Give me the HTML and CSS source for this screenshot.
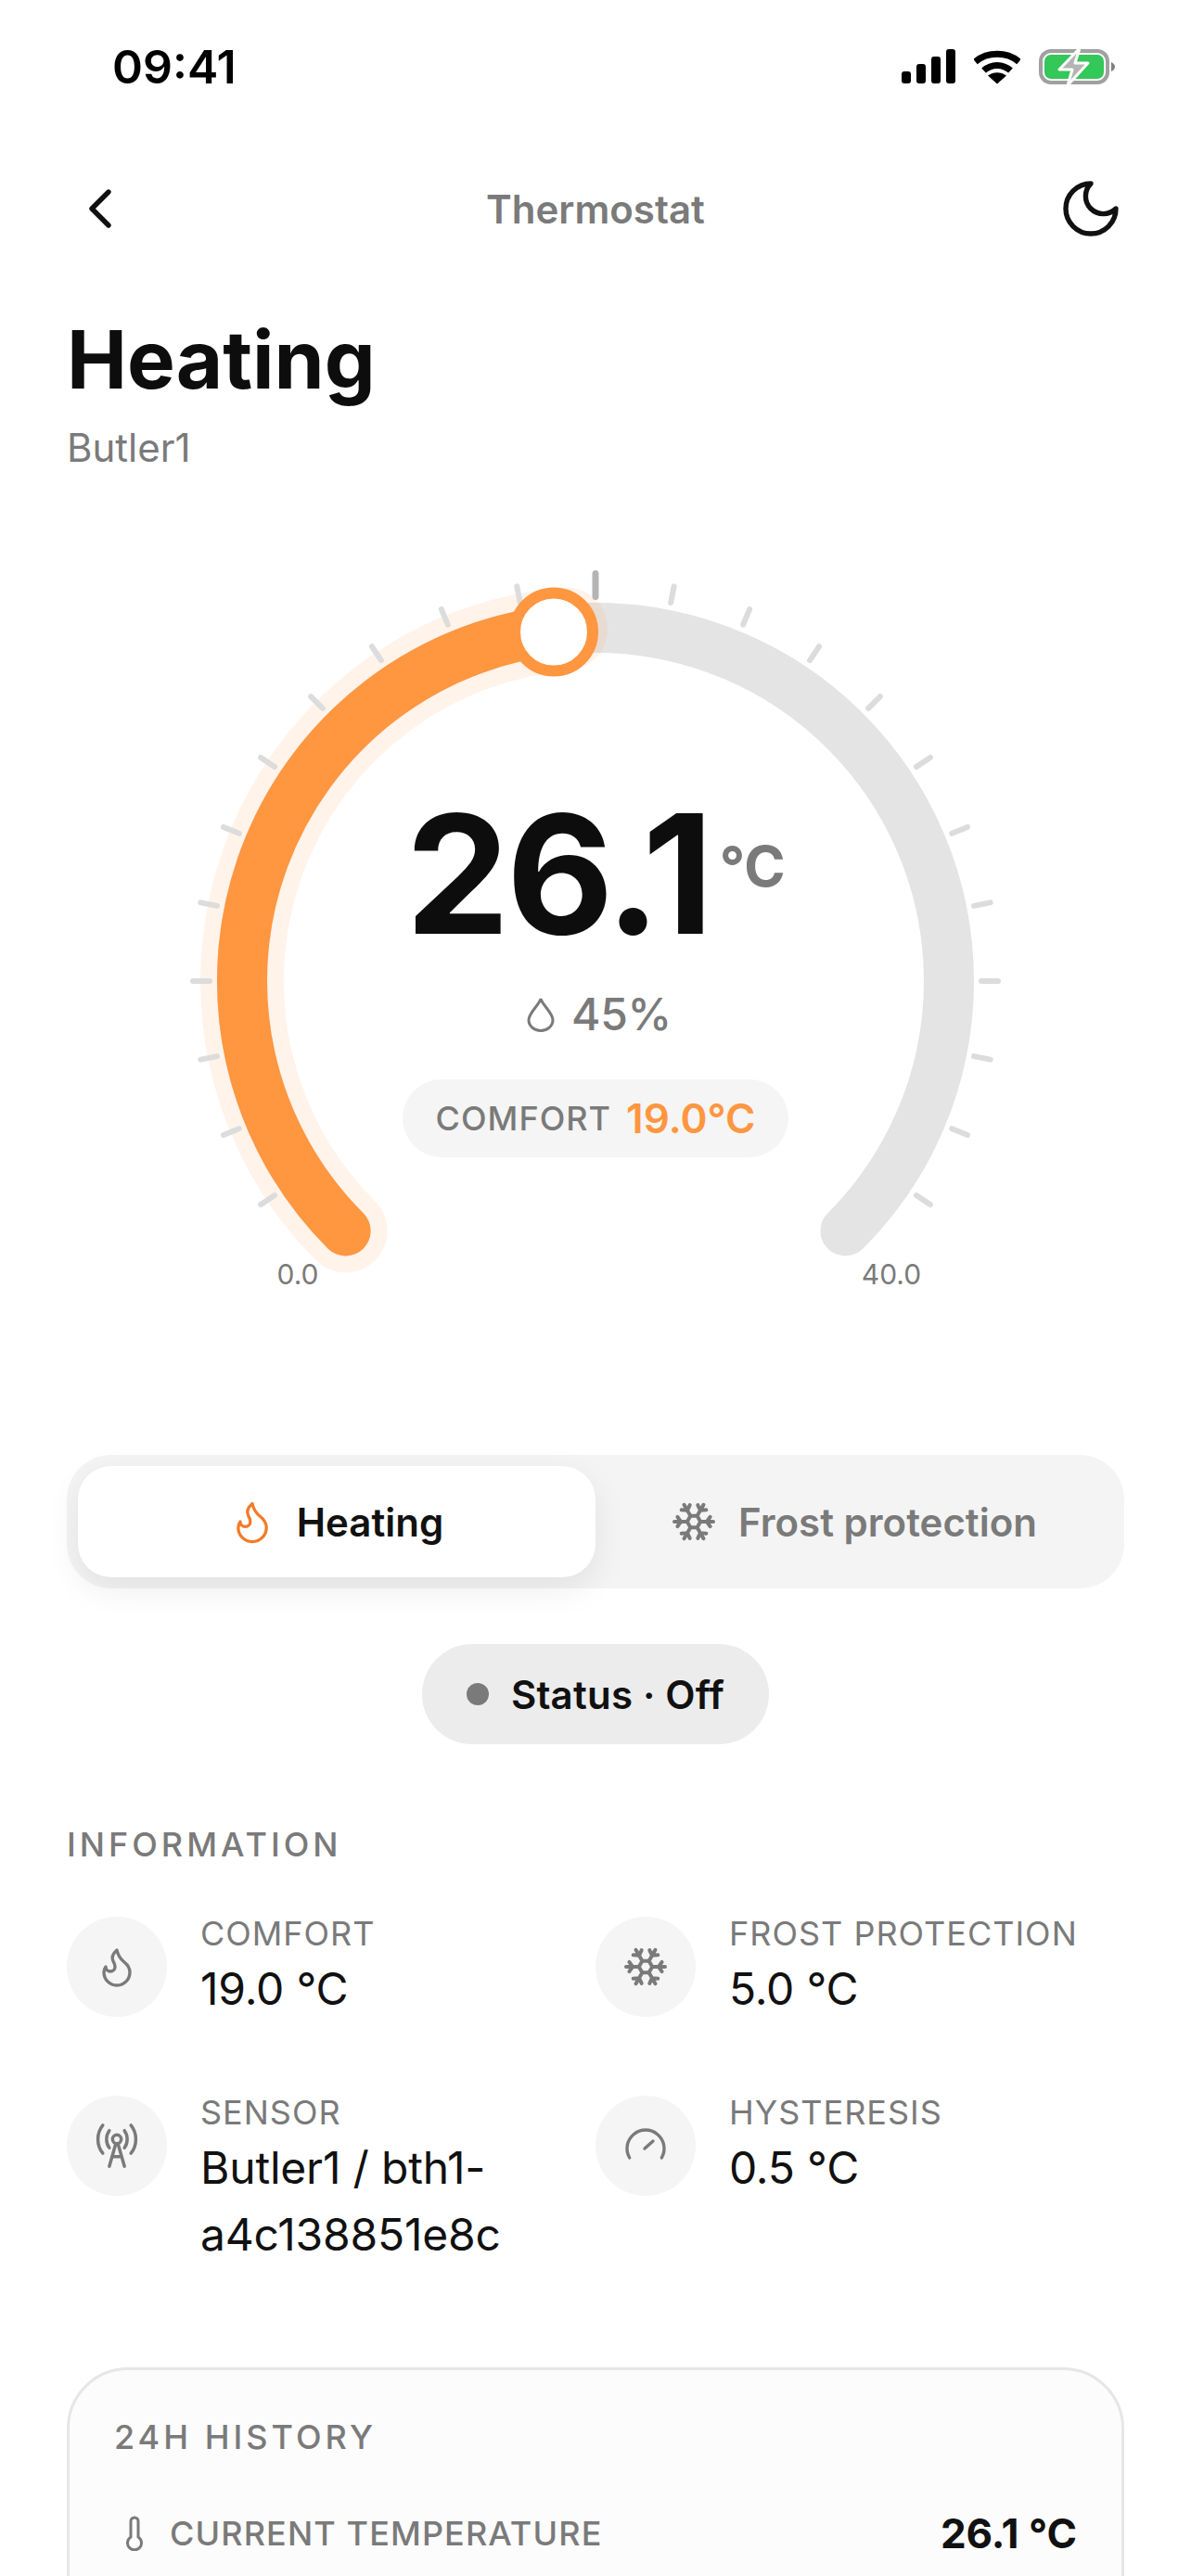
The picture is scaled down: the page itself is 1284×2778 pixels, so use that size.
FILE: index.html
```html
<!DOCTYPE html>
<html lang="en">
<head>
<meta charset="UTF-8">
<meta name="viewport" content="width=device-width, initial-scale=1.0">
<title>Thermostat</title>
<link rel="stylesheet" href="styles.css">
</head>
<body>

<svg class="sprite">
  <defs>
    <path id="arm" d="M15.6 12H22.5M19 12l1.8 2.6M19 12l1.8-2.6"/>
  </defs>
  <symbol id="snowflake" viewBox="0 0 24 24">
    <path d="M15.6 12 13.8 15.12H10.2L8.4 12 10.2 8.88H13.8Z"/>
    <use href="#arm"/>
    <use href="#arm" transform="rotate(60 12 12)"/>
    <use href="#arm" transform="rotate(120 12 12)"/>
    <use href="#arm" transform="rotate(180 12 12)"/>
    <use href="#arm" transform="rotate(240 12 12)"/>
    <use href="#arm" transform="rotate(300 12 12)"/>
  </symbol>
  <symbol id="flame" viewBox="0 0 24 24">
    <path d="M8.5 14.5A2.5 2.5 0 0 0 11 12c0-1.38-.5-2-1-3-1.072-2.143-.224-4.054 2-6 .5 2.5 2 4.9 4 6.5 2 1.6 3 3.5 3 5.5a7 7 0 1 1-14 0c0-1.153.433-2.294 1-3a2.5 2.5 0 0 0 2.5 2.5z"/>
  </symbol>
</svg>

<div class="statusbar">
  <span class="time">09:41</span>
  <div class="status-icons">
    <svg width="58" height="38" viewBox="0 0 58 38" fill="#000">
      <rect x="0" y="24" width="10" height="13" rx="3"/>
      <rect x="16" y="16" width="10" height="21" rx="3"/>
      <rect x="32" y="8" width="10" height="29" rx="3"/>
      <rect x="48" y="0" width="10" height="37" rx="3"/>
    </svg>
    <svg width="50" height="38" viewBox="0 0 50 38" fill="none" stroke="#000" stroke-width="7">
      <path d="M1.5 13.5C14.5 2.5 35.5 2.5 48.5 13.5"/>
      <path d="M10.5 23C19 15.5 31 15.5 39.5 23"/>
      <path d="M25 37.5 15 28.5C21 24 29 24 35 28.5Z" fill="#000" stroke="none"/>
    </svg>
    <svg width="82" height="40" viewBox="0 0 82 40">
      <rect x="2" y="3" width="72" height="34" rx="11" fill="none" stroke="#a0a0a0" stroke-width="4"/>
      <rect x="6" y="7" width="64" height="26" rx="7" fill="#34c759"/>
      <path d="M78 15c2.5 1 4 3 4 5s-1.5 4-4 5Z" fill="#808080"/>
      <path d="M44 0 22 23H36L31 40 53 16H39Z" fill="#b4b4b4" stroke="#fff" stroke-width="3" stroke-linejoin="round"/>
    </svg>
  </div>
</div>

<div class="nav">
  <svg class="nav-icon" viewBox="0 0 24 24" fill="none" stroke="#111" stroke-width="1.8" stroke-linecap="round" stroke-linejoin="round">
    <path d="m15 18-6-6 6-6"/>
  </svg>
  <span class="nav-title">Thermostat</span>
  <svg class="nav-icon" viewBox="0 0 24 24" fill="none" stroke="#111" stroke-width="1.8" stroke-linecap="round" stroke-linejoin="round">
    <path d="M12 3a6 6 0 0 0 9 9 9 9 0 1 1-9-9Z"/>
  </svg>
</div>

<div class="page-head">
  <h1>Heating</h1>
  <p>Butler1</p>
</div>

<div class="gauge">
  <svg class="dial" width="1140" height="810" viewBox="0 0 1140 810" fill="none">
    <path d="M300.6 726.4A381 381 0 1 1 839.4 726.4" stroke="#e4e4e4" stroke-width="54" stroke-linecap="round"/>
    <path d="M300.6 726.4A381 381 0 0 1 538 77.3" stroke="#ff9640" stroke-opacity="0.11" stroke-width="90" stroke-linecap="round"/>
    <path d="M300.6 726.4A381 381 0 0 1 538 77.3" stroke="#ff9640" stroke-width="54" stroke-linecap="round"/>
    <g stroke="#dcdcdc" stroke-width="6" stroke-linecap="round">
      <line x1="570" y1="23" x2="570" y2="41" transform="rotate(-123.75 570 457)"/>
      <line x1="570" y1="23" x2="570" y2="41" transform="rotate(-112.5 570 457)"/>
      <line x1="570" y1="23" x2="570" y2="41" transform="rotate(-101.25 570 457)"/>
      <line x1="570" y1="23" x2="570" y2="41" transform="rotate(-90 570 457)"/>
      <line x1="570" y1="23" x2="570" y2="41" transform="rotate(-78.75 570 457)"/>
      <line x1="570" y1="23" x2="570" y2="41" transform="rotate(-67.5 570 457)"/>
      <line x1="570" y1="23" x2="570" y2="41" transform="rotate(-56.25 570 457)"/>
      <line x1="570" y1="23" x2="570" y2="41" transform="rotate(-45 570 457)"/>
      <line x1="570" y1="23" x2="570" y2="41" transform="rotate(-33.75 570 457)"/>
      <line x1="570" y1="23" x2="570" y2="41" transform="rotate(-22.5 570 457)"/>
      <line x1="570" y1="23" x2="570" y2="41" transform="rotate(-11.25 570 457)"/>
      <line x1="570" y1="23" x2="570" y2="41" transform="rotate(11.25 570 457)"/>
      <line x1="570" y1="23" x2="570" y2="41" transform="rotate(22.5 570 457)"/>
      <line x1="570" y1="23" x2="570" y2="41" transform="rotate(33.75 570 457)"/>
      <line x1="570" y1="23" x2="570" y2="41" transform="rotate(45 570 457)"/>
      <line x1="570" y1="23" x2="570" y2="41" transform="rotate(56.25 570 457)"/>
      <line x1="570" y1="23" x2="570" y2="41" transform="rotate(67.5 570 457)"/>
      <line x1="570" y1="23" x2="570" y2="41" transform="rotate(78.75 570 457)"/>
      <line x1="570" y1="23" x2="570" y2="41" transform="rotate(90 570 457)"/>
      <line x1="570" y1="23" x2="570" y2="41" transform="rotate(101.25 570 457)"/>
      <line x1="570" y1="23" x2="570" y2="41" transform="rotate(112.5 570 457)"/>
      <line x1="570" y1="23" x2="570" y2="41" transform="rotate(123.75 570 457)"/>
    </g>
    <line x1="570" y1="17.5" x2="570" y2="42.5" stroke="#b4b4b4" stroke-width="7" stroke-linecap="round"/>
    <circle cx="525" cy="80.5" r="42" fill="#fff" stroke="#ff9640" stroke-width="12"/>
    <text class="dial-label" x="249" y="784" text-anchor="middle">0.0</text>
    <text class="dial-label" x="889" y="784" text-anchor="middle">40.0</text>
  </svg>

  <div class="readout">
    <div class="temp"><span class="temp-value">26.1</span><span class="temp-unit">°C</span></div>
    <div class="humidity">
      <svg width="30" height="38" viewBox="0 0 30 38" fill="none" stroke="#7a7a7a" stroke-width="3">
        <path d="M15 2C14 8 2 17 2 25a13 11.5 0 0 0 26 0C28 17 16 8 15 2Z"/>
      </svg>
      <span>45%</span>
    </div>
    <div class="setpoint"><span class="setpoint-label">COMFORT</span><span class="setpoint-value">19.0°C</span></div>
  </div>
</div>

<div class="segment">
  <div class="segment-item active">
    <svg class="segment-icon flame-icon"><use href="#flame"/></svg>
    <span>Heating</span>
  </div>
  <div class="segment-item">
    <svg class="segment-icon frost-icon"><use href="#snowflake"/></svg>
    <span>Frost protection</span>
  </div>
</div>

<div class="status-row">
  <div class="status-pill"><i class="dot"></i><span>Status · Off</span></div>
</div>

<h2 class="section-title">INFORMATION</h2>
<div class="info-grid">
  <div class="info-item">
    <div class="info-icon">
      <svg class="line-icon"><use href="#flame"/></svg>
    </div>
    <div class="info-text"><div class="info-label">COMFORT</div><div class="info-value">19.0 °C</div></div>
  </div>
  <div class="info-item">
    <div class="info-icon">
      <svg class="frost-icon"><use href="#snowflake"/></svg>
    </div>
    <div class="info-text"><div class="info-label">FROST PROTECTION</div><div class="info-value">5.0 °C</div></div>
  </div>
  <div class="info-item">
    <div class="info-icon">
      <svg class="line-icon tower-icon" viewBox="0 0 24 24">
        <path d="M5.5 2.5c-3 3.7-3 9.3 0 13M18.5 2.5c3 3.7 3 9.3 0 13M8.5 5c-1.7 2.3-1.7 5.7 0 8M15.5 5c1.7 2.3 1.7 5.7 0 8"/>
        <circle cx="12" cy="9" r="2"/>
        <path d="M11.5 11 8.5 21.5M12.5 11l3 10.5M9.8 17h4.4"/>
      </svg>
    </div>
    <div class="info-text"><div class="info-label">SENSOR</div><div class="info-value">Butler1 / bth1-a4c138851e8c</div></div>
  </div>
  <div class="info-item">
    <div class="info-icon">
      <svg class="line-icon" viewBox="0 0 24 24">
        <path d="M3.34 18.5A10 10 0 1 1 20.66 18.5M11.5 13.5 16 9.5"/>
      </svg>
    </div>
    <div class="info-text"><div class="info-label">HYSTERESIS</div><div class="info-value">0.5 °C</div></div>
  </div>
</div>

<div class="card">
  <h2 class="section-title card-title">24H HISTORY</h2>
  <div class="card-row">
    <svg class="thermo" viewBox="0 0 20 38" fill="none" stroke="#7a7a7a" stroke-width="3">
      <path d="M6 6a4 4 0 0 1 8 0v17a7.5 7.5 0 1 1-8 0Z"/>
    </svg>
    <span class="card-label">CURRENT TEMPERATURE</span>
    <span class="card-value">26.1 °C</span>
  </div>
</div>

</body>
</html>
```

FILE: styles.css
```css
html, body {
  margin: 0;
  padding: 0;
  background-color: white;
  font-family: Inter, "Liberation Sans", sans-serif;
  color: #111;
}
body {
  width: 1284px;
  height: 2778px;
  overflow: hidden;
}
svg {
  display: block;
}
.sprite {
  display: none;
}

/* status bar */
.statusbar {
  height: 144px;
  padding: 0 82px 0 121px;
  display: flex;
  align-items: center;
  justify-content: space-between;
  box-sizing: border-box;
}
.time {
  font-size: 50px;
  font-weight: 600;
  color: #000;
}
.status-icons {
  display: flex;
  align-items: center;
  gap: 20px;
}

/* nav */
.nav {
  margin-top: 45px;
  padding: 0 72px;
  display: flex;
  align-items: center;
  justify-content: space-between;
}
.nav-icon {
  width: 72px;
  height: 72px;
}
.nav-title {
  font-size: 42px;
  font-weight: 600;
  color: #7a7a7a;
}

.page-head {
  margin-top: 75px;
  padding: 0 72px;
}
.page-head h1 {
  margin: 0;
  font-size: 87px;
  line-height: 104px;
  font-weight: 700;
  color: #0d0d0d;
}
.page-head p {
  margin: 19px 0 0;
  font-size: 42px;
  line-height: 48px;
  color: #7a7a7a;
}

/* gauge */
.gauge {
  position: relative;
  margin: 94px 72px 0;
  width: 1140px;
  height: 810px;
}
.dial-label {
  font-family: Inter, "Liberation Sans", sans-serif;
  font-size: 30px;
  fill: #7a7a7a;
}
.readout {
  position: absolute;
  top: 237px;
  left: 0;
  right: 0;
  display: flex;
  flex-direction: column;
  align-items: center;
}
.temp {
  display: flex;
  align-items: flex-start;
  line-height: 1;
}
.temp-value {
  font-size: 178px;
  font-weight: 700;
  letter-spacing: -3.5px;
  line-height: 210px;
  color: #0d0d0d;
}
.temp-unit {
  margin-top: 60px;
  margin-left: 10px;
  font-size: 60px;
  font-weight: 700;
  line-height: 72px;
  color: #7a7a7a;
}
.humidity {
  margin-top: 18px;
  margin-left: 8px;
  display: flex;
  align-items: center;
  gap: 18px;
  font-size: 48px;
  font-weight: 500;
  letter-spacing: -0.3px;
  line-height: 56px;
  color: #7a7a7a;
}
.setpoint {
  margin-top: 42px;
  height: 84px;
  padding: 0 36px;
  display: flex;
  align-items: center;
  gap: 16px;
  border-radius: 42px;
  background-color: #f5f5f5;
}
.setpoint-label {
  font-size: 36px;
  font-weight: 500;
  letter-spacing: 1px;
  color: #7a7a7a;
}
.setpoint-value {
  font-size: 44px;
  font-weight: 600;
  color: #ff9640;
}

/* mode switch */
.segment {
  margin: 158px 72px 0;
  padding: 12px;
  display: flex;
  height: 144px;
  box-sizing: border-box;
  border-radius: 48px;
  background-color: #f4f4f4;
}
.segment-item {
  flex: 1;
  display: flex;
  align-items: center;
  justify-content: center;
  gap: 24px;
  border-radius: 36px;
  font-size: 42px;
  font-weight: 600;
  color: #7a7a7a;
}
.segment-item.active {
  background-color: white;
  color: #111;
  box-shadow: 0 12px 36px rgba(0,0,0,0.08);
}
.segment-icon {
  width: 48px;
  height: 48px;
}
.flame-icon {
  width: 52px;
  height: 52px;
  margin-right: -2px;
  margin-left: -2px;
  fill: none;
  stroke: #f47a25;
  stroke-width: 1.5;
  stroke-linecap: round;
  stroke-linejoin: round;
}
.frost-icon {
  fill: none;
  stroke: #7a7a7a;
  stroke-width: 2;
  stroke-linecap: round;
  stroke-linejoin: round;
}
.line-icon {
  fill: none;
  stroke: #7a7a7a;
  stroke-width: 1.7;
  stroke-linecap: round;
  stroke-linejoin: round;
}

.status-row {
  margin-top: 60px;
  display: flex;
  justify-content: center;
}
.status-pill {
  height: 108px;
  padding: 0 48px;
  display: flex;
  align-items: center;
  gap: 24px;
  border-radius: 54px;
  background-color: #ececec;
  font-size: 42px;
  font-weight: 600;
  letter-spacing: 0.2px;
}
.dot {
  width: 24px;
  height: 24px;
  border-radius: 50%;
  background-color: #7a7a7a;
}

/* information */
.section-title {
  margin: 0;
  font-size: 36px;
  line-height: 44px;
  font-weight: 500;
  letter-spacing: 4px;
  color: #7a7a7a;
}
h2.section-title {
  margin: 86px 72px 0;
}
.info-grid {
  margin: 50px 72px 0;
  display: grid;
  grid-template-columns: 570px 570px;
  row-gap: 73px;
}
.info-item {
  display: flex;
  gap: 36px;
}
.info-icon {
  flex: none;
  width: 108px;
  height: 108px;
  margin-top: 6px;
  border-radius: 50%;
  background-color: #f5f5f5;
  display: flex;
  align-items: center;
  justify-content: center;
}
.info-icon svg {
  width: 48px;
  height: 48px;
}
.info-icon .tower-icon {
  width: 56px;
  height: 56px;
  stroke-width: 1.5;
}
.info-label {
  font-size: 36px;
  line-height: 48px;
  letter-spacing: 1px;
  color: #7a7a7a;
}
.info-value {
  font-size: 48px;
  line-height: 72px;
  letter-spacing: -0.2px;
}

/* history card */
.card {
  margin: 107px 72px 0;
  padding: 50px 48px;
  height: 600px;
  border: 3px solid #e6e6e6;
  border-radius: 66px;
  background-color: #fcfcfc;
}
h2.card-title {
  margin: 0;
}
.card-row {
  margin-top: 55px;
  display: flex;
  align-items: center;
}
.thermo {
  width: 20px;
  height: 38px;
  margin: 0 28px 0 12px;
}
.card-label {
  flex: 1;
  font-size: 36px;
  font-weight: 500;
  letter-spacing: 1.1px;
  color: #7a7a7a;
}
.card-value {
  font-size: 44px;
  font-weight: 700;
}
```
